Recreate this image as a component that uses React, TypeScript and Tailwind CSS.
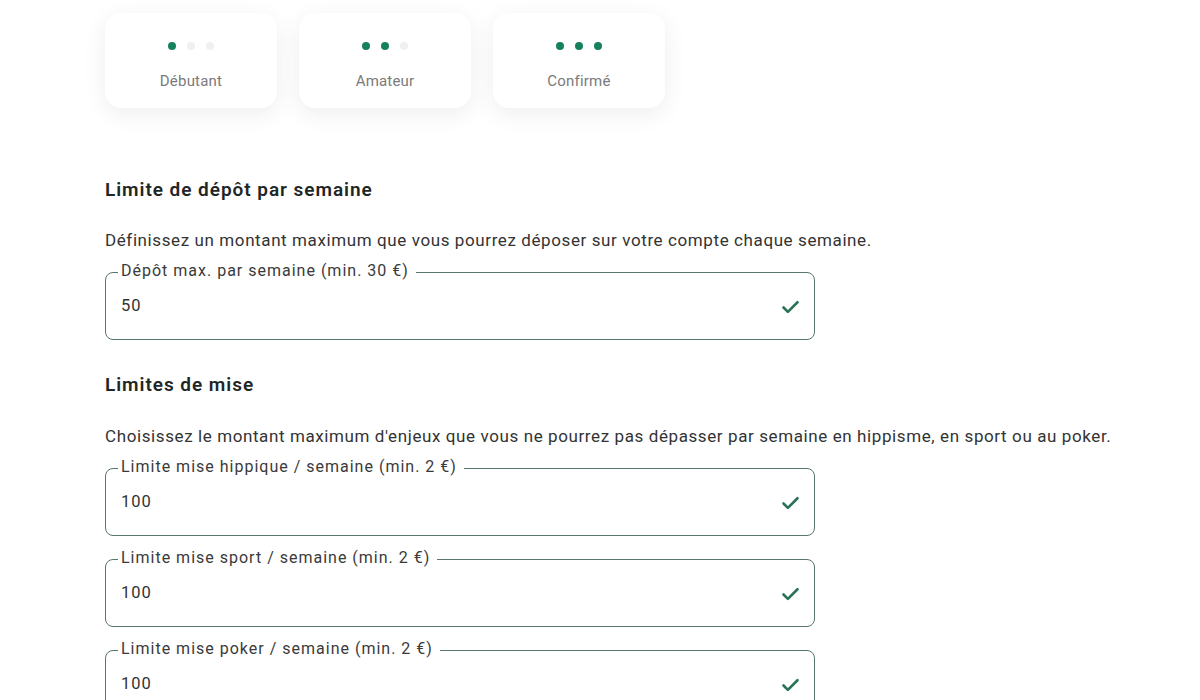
import { Check } from 'lucide-react';

const levels = [
  { label: 'Débutant', filled: 1 },
  { label: 'Amateur', filled: 2 },
  { label: 'Confirmé', filled: 3 },
];

const LevelCard = ({ label, filled }: { label: string; filled: number }) => (
  <div className="w-[172px] h-[95px] bg-white rounded-2xl shadow-[0_6px_24px_rgba(0,0,0,0.07)] flex flex-col items-center pt-[29px]">
    <div className="flex gap-[11px]">
      {[0, 1, 2].map((i) => (
        <span
          key={i}
          className={i < filled ? 'w-2 h-2 rounded-full bg-[#17805f]' : 'w-2 h-2 rounded-full bg-[#f0f0f0]'}
        />
      ))}
    </div>
    <span className="mt-[20px] text-[15px] tracking-[0.2px] text-[#7a7a7a]">{label}</span>
  </div>
);

// outlined input with the label sitting on the top border
const LimitField = ({ label, value }: { label: string; value: string }) => (
  <div className="relative w-[710px] h-[68px] border-[1.5px] border-[#56766f] rounded-lg pl-[15px] pr-[13px] flex items-center justify-between">
    <span className="absolute left-[12px] -top-[2px] -translate-y-1/2 bg-white pl-[3px] pr-[7px] text-[16px] tracking-[1px] leading-[20px] text-[#3a3a3a]">
      {label}
    </span>
    <span className="text-[16.5px] tracking-[1px] text-[#333] mt-[1px]">{value}</span>
    <Check className="w-[21px] h-[21px] text-[#2b7357] mt-[3px]" strokeWidth={3} />
  </div>
);

export default function App() {
  return (
    <div className="w-[1200px] h-[700px] overflow-hidden bg-white font-['Roboto',sans-serif] pl-[105px] pt-[13px]">
      <div className="flex gap-[22px]">
        {levels.map((l) => (
          <LevelCard key={l.label} {...l} />
        ))}
      </div>

      <h2 className="mt-[70px] text-[19px] leading-[24px] font-semibold tracking-[0.95px] text-[#1f2626]">
        Limite de dépôt par semaine
      </h2>
      <p className="mt-[26px] text-[17px] leading-[24px] tracking-[0.6px] text-[#333]">
        Définissez un montant maximum que vous pourrez déposer sur votre compte chaque semaine.
      </p>
      <div className="mt-[20px]">
        <LimitField label="Dépôt max. par semaine (min. 30 €)" value="50" />
      </div>

      <h2 className="mt-[33px] text-[19px] leading-[24px] font-semibold tracking-[0.95px] text-[#1f2626]">
        Limites de mise
      </h2>
      <p className="mt-[27px] text-[17px] leading-[24px] tracking-[0.6px] text-[#333]">
        Choisissez le montant maximum d'enjeux que vous ne pourrez pas dépasser par semaine en hippisme, en sport ou au poker.
      </p>
      <div className="mt-[20px] flex flex-col gap-[23px]">
        <LimitField label="Limite mise hippique / semaine (min. 2 €)" value="100" />
        <LimitField label="Limite mise sport / semaine (min. 2 €)" value="100" />
        <LimitField label="Limite mise poker / semaine (min. 2 €)" value="100" />
      </div>
    </div>
  );
}
